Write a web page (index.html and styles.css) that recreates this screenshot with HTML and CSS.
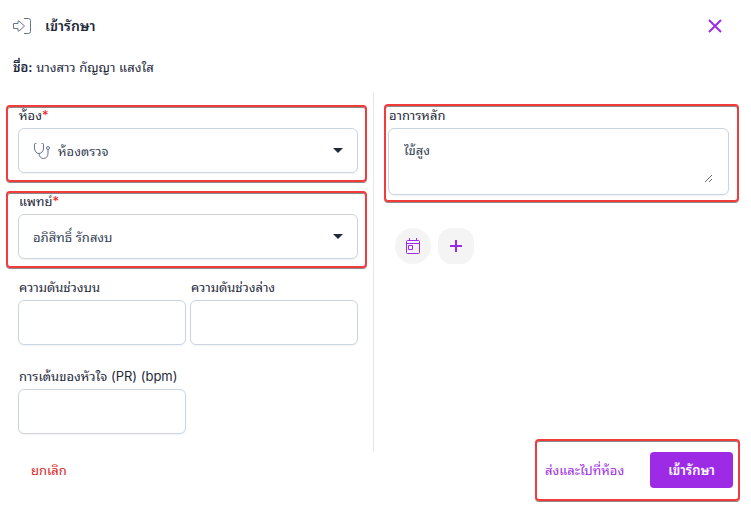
FILE: index.html
```html
<!DOCTYPE html>
<html lang="th">

<head>
    <meta charset="utf-8">
    <title>เข้ารักษา</title>
    <link rel="stylesheet" href="styles.css">
</head>

<body>
    <form class="dialog">
        <header class="dialog-header">
            <svg class="title-icon" viewBox="0 0 20 20" width="20" height="20">
                <path d="M1.500 7.500h4.500V5.500q0-1 1-.5l5.500 5-5.500 5q-1 .5-1-.5v-2H1.500zM12 2.500h4.500a2 2 0 0 1 2 2v11a2 2 0 0 1-2 2H12" />
            </svg>
            <h1>เข้ารักษา</h1>
            <button type="button" class="close" aria-label="ปิด">
                <svg viewBox="0 0 14 14" width="14" height="14">
                    <path d="M1 1l12 12M13 1L1 13" />
                </svg>
            </button>
        </header>

        <p class="patient"><b>ชื่อ:</b> นางสาว กัญญา แสงใส</p>

        <div class="columns">
            <div class="column column-left">
                <div class="field marked">
                    <label for="room">ห้อง<span class="required">*</span></label>
                    <div class="control">
                        <svg class="stethoscope" viewBox="0 0 18 18" width="18" height="18">
                            <path d="M3.500 1.500h-1a1 1 0 0 0-1 1V6c0 3 2 5.500 4.500 5.500S10.500 9 10.500 6V2.500a1 1 0 0 0-1-1h-1M6 11.500c0 3 2 5 4.500 5s4.500-2 4.500-5V7.500" />
                            <circle cx="15" cy="6" r="1.500" />
                        </svg>
                        <select id="room" name="room">
                            <option>ห้องตรวจ</option>
                        </select>
                        <svg class="caret" viewBox="0 0 10 5" width="10" height="5"><path d="M0 0h10L5 5z" /></svg>
                    </div>
                </div>

                <div class="field marked">
                    <label for="doctor">แพทย์<span class="required">*</span></label>
                    <div class="control">
                        <select id="doctor" name="doctor">
                            <option>อภิสิทธิ์ รักสงบ</option>
                        </select>
                        <svg class="caret" viewBox="0 0 10 5" width="10" height="5"><path d="M0 0h10L5 5z" /></svg>
                    </div>
                </div>

                <div class="pair">
                    <div class="field">
                        <label for="systolic">ความดันช่วงบน</label>
                        <input class="control" type="text" id="systolic" name="systolic">
                    </div>
                    <div class="field">
                        <label for="diastolic">ความดันช่วงล่าง</label>
                        <input class="control" type="text" id="diastolic" name="diastolic">
                    </div>
                </div>

                <div class="pair">
                    <div class="field">
                        <label for="pulse">การเต้นของหัวใจ (PR) (bpm)</label>
                        <input class="control" type="text" id="pulse" name="pulse">
                    </div>
                </div>
            </div>

            <div class="column column-right">
                <div class="field marked">
                    <label for="symptom">อาการหลัก</label>
                    <div class="control control-area">
                        <textarea id="symptom" name="symptom">ไข้สูง</textarea>
                    </div>
                </div>

                <div class="tools">
                    <button type="button" class="tool" aria-label="นัดหมาย">
                        <svg viewBox="0 0 16 18" width="16" height="18">
                            <path d="M2.500 3.500h11a1 1 0 0 1 1 1v11a1 1 0 0 1-1 1h-11a1 1 0 0 1-1-1v-11a1 1 0 0 1 1-1zM1.500 6.500h13M4.500 1v2.500M11.500 1v2.500M3.500 8.500h4v4h-4z" />
                        </svg>
                    </button>
                    <button type="button" class="tool tool-add" aria-label="เพิ่ม">
                        <svg viewBox="0 0 14 14" width="14" height="14">
                            <path d="M7 1v12M1 7h12" />
                        </svg>
                    </button>
                </div>
            </div>
        </div>

        <footer class="dialog-footer">
            <button type="button" class="btn btn-cancel">ยกเลิก</button>
            <div class="actions marked">
                <button type="button" class="btn btn-text">ส่งและไปที่ห้อง</button>
                <button type="submit" class="btn btn-primary">เข้ารักษา</button>
            </div>
        </footer>
    </form>
</body>

</html>
```
FILE: styles.css
```css
* {
    box-sizing: border-box;
}

body {
    margin: 0;
    background: #fff;
    color: #1e293b;
    font-family: Inter, Tahoma, "Noto Sans Thai Looped", "Noto Looped Thai", Loma, Waree, "Noto Sans Thai", sans-serif;
    font-size: 13px;
    line-height: 20px;
}

button, input, select, textarea {
    font: inherit;
}

button {
    border: none;
    background: none;
    padding: 0;
    cursor: pointer;
}

svg {
    display: block;
    flex: none;
    fill: none;
    stroke: currentColor;
}

.dialog-header {
    display: flex;
    align-items: center;
    gap: 13px;
    height: 52px;
    padding: 0 28px 0 12px;
}

.dialog-header h1 {
    flex: 1;
    margin: 0;
    font-size: 14px;
    font-weight: 600;
}

.title-icon {
    color: #64748b;
}

.close {
    padding: 1px;
    color: #9d2be6;
    stroke-width: 2;
}

.patient {
    margin: 5px 13px 15px;
}

.patient b {
    font-weight: 600;
}

.columns {
    display: grid;
    grid-template-columns: 374px 1fr;
}

.column {
    padding: 13px 14px 18px;
}

.column-left {
    display: flex;
    flex-direction: column;
    gap: 18px;
    padding-right: 15px;
    padding-left: 18px;
    border-right: 1px solid #e2e8f0;
}

.column-right {
    padding-right: 22px;
}

.pair {
    display: grid;
    grid-template-columns: 1fr 1fr;
    gap: 4px;
}

.pair + .pair {
    margin-top: 3px;
}

.field {
    display: flex;
    flex-direction: column;
    gap: 3px;
}

.field label {
    height: 20px;
    padding-left: 1px;
    white-space: nowrap;
}

.required {
    color: #ef2020;
}

.control {
    display: flex;
    align-items: center;
    gap: 7px;
    width: 100%;
    height: 45px;
    padding: 0 14px;
    border: 1px solid #cbd5e1;
    border-radius: 6px;
    background: #fff;
    box-shadow: 0 1px 2px rgba(0, 0, 0, 0.05);
    color: #334155;
}

.control select {
    flex: 1;
    min-width: 0;
    padding: 0;
    border: none;
    background: none;
    color: inherit;
    appearance: none;
}

.stethoscope {
    color: #64748b;
}

.caret {
    fill: #1e293b;
    stroke: none;
}

.control-area {
    height: 67px;
    padding: 11px 15px;
}

.control-area textarea {
    width: 100%;
    height: 100%;
    padding: 0;
    border: none;
    background: none;
    color: inherit;
}

.marked {
    position: relative;
}

.marked::after {
    content: "";
    position: absolute;
    inset: 0 -9px -9px -12px;
    border: 2px solid #f23b3b;
    border-radius: 4px;
    box-shadow: 0 1px 0 #8a8a8a, inset 0 1px 0 #8a8a8a;
    pointer-events: none;
}

.column-right .marked::after {
    inset: -1px -10px -7px -4px;
}

.tools {
    display: flex;
    gap: 7px;
    padding: 33px 0 0 7px;
}

.tool {
    display: grid;
    place-items: center;
    width: 36px;
    height: 36px;
    border-radius: 50%;
    background: #f4f4f4;
    color: #9d2be6;
}

.tool-add {
    border-radius: 14px;
    stroke-width: 2;
}

.dialog-footer {
    display: flex;
    justify-content: space-between;
    padding: 0 18px 17px 16px;
}

.btn {
    height: 36px;
    padding: 0 15px;
    border-radius: 4px;
}

.btn-cancel {
    color: #dc2626;
}

.actions {
    display: flex;
    gap: 11px;
}

.actions::after {
    inset: -13px -7px -13px 5px;
}

.btn-text {
    color: #9d2be6;
}

.btn-primary {
    padding: 0 18px;
    background: #9d2be6;
    color: #fff;
    font-weight: 600;
}
```
